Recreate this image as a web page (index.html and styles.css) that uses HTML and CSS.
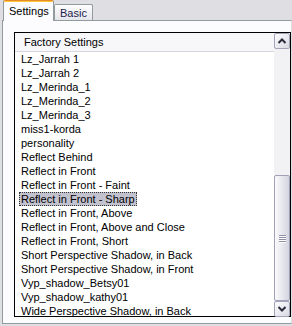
FILE: index.html
```html
<!DOCTYPE html>
<html lang="en">
<head>
    <meta charset="UTF-8">
    <title>Settings</title>
    <link rel="stylesheet" href="styles.css">
</head>
<body>
    <div class="tabs">
        <div class="tab active">Settings</div>
        <div class="tab">Basic</div>
    </div>

    <div class="panel">
        <div class="listbox">
            <div class="list-main">
                <div class="list-header">Factory Settings</div>
                <ul class="items">
                    <li>Lz_Jarrah 1</li>
                    <li>Lz_Jarrah 2</li>
                    <li>Lz_Merinda_1</li>
                    <li>Lz_Merinda_2</li>
                    <li>Lz_Merinda_3</li>
                    <li>miss1-korda</li>
                    <li>personality</li>
                    <li>Reflect Behind</li>
                    <li>Reflect in Front</li>
                    <li>Reflect in Front - Faint</li>
                    <li class="selected">Reflect in Front - Sharp</li>
                    <li>Reflect in Front, Above</li>
                    <li>Reflect in Front, Above and Close</li>
                    <li>Reflect in Front, Short</li>
                    <li>Short Perspective Shadow, in Back</li>
                    <li>Short Perspective Shadow, in Front</li>
                    <li>Vyp_shadow_Betsy01</li>
                    <li>Vyp_shadow_kathy01</li>
                    <li>Wide Perspective Shadow, in Back</li>
                </ul>
            </div>

            <div class="scrollbar">
                <div class="sb-btn">
                    <svg width="14" height="14" viewBox="0 0 14 14"><polyline points="3.5,9 7,5.5 10.5,9" fill="none" stroke="#2b2b3a" stroke-width="2"/></svg>
                </div>
                <div class="sb-track">
                    <div class="sb-thumb">
                        <div class="grip"><span></span><span></span><span></span><span></span></div>
                    </div>
                </div>
                <div class="sb-btn">
                    <svg width="14" height="14" viewBox="0 0 14 14"><polyline points="3.5,5 7,8.5 10.5,5" fill="none" stroke="#2b2b3a" stroke-width="2"/></svg>
                </div>
            </div>
        </div>
    </div>
</body>
</html>
```

FILE: styles.css
```css
body {
    margin: 0;
    width: 292px;
    height: 326px;
    overflow: hidden;
    background: #dfdfe3;
    font-family: "Liberation Sans", Arial, sans-serif;
    font-size: 11px;
    color: #000;
}
.tabs {
    display: flex;
    align-items: flex-end;
    height: 20px;
    padding-left: 3px;
}
.tab {
    box-sizing: border-box;
    height: 16px;
    width: 39px;
    padding: 2px 0 0 5px;
    border: 1px solid #919b9c;
    border-bottom: none;
    border-radius: 2px 2px 0 0;
    background: linear-gradient(#fefefe, #e4e4ec);
    color: #1c1c4c;
}
.tab.active {
    position: relative;
    z-index: 1;
    height: 21px;
    width: 51px;
    margin-bottom: -1px;
    padding: 4px 0 0 5px;
    border-top: 1px solid #e68b2c;
    box-shadow: inset 0 1px #ffc73c;
    background: #fcfcfe;
    color: #000;
}
.panel {
    box-sizing: border-box;
    width: 290px;
    height: 304px;
    margin-left: 2px;
    padding: 11px 0 0 11px;
    border: 1px solid #919b9c;
    border-right-color: #dfdfe3;
    background: #fcfcfe;
}
.listbox {
    display: flex;
    box-sizing: border-box;
    width: 277px;
    height: 285px;
    border: 1px solid #000;
    background: #fff;
}
.list-main {
    flex: 1;
    overflow: hidden;
}
.list-header {
    height: 18px;
    line-height: 18px;
    padding-left: 9px;
    background: #f7f7fa;
    border-bottom: 1px solid #d6d6e0;
}
.items {
    list-style: none;
    margin: 0;
    padding: 0;
    white-space: nowrap;
}
.items li {
    width: fit-content;
    height: 14px;
    line-height: 14px;
    margin-left: 4px;
    padding: 0 2px;
}
.items li.selected {
    background: #c2c2ce;
    outline: 1px dotted #333;
    outline-offset: -1px;
}
.scrollbar {
    display: flex;
    flex-direction: column;
    width: 16px;
    background: #f2f2f5;
}
.sb-btn {
    box-sizing: border-box;
    display: flex;
    align-items: center;
    justify-content: center;
    height: 16px;
    border: 1px solid #a4a4b8;
    border-radius: 2px;
    background: linear-gradient(135deg, #fdfdff, #d9d9e4);
}
.sb-track {
    flex: 1;
}
.sb-thumb {
    box-sizing: border-box;
    display: flex;
    align-items: center;
    justify-content: center;
    height: 126px;
    margin-top: 126px;
    border: 1px solid #a0a0b6;
    border-radius: 2px;
    background: linear-gradient(90deg, #fbfbfd, #d4d4e0);
}
.grip {
    display: flex;
    flex-direction: column;
    gap: 1px;
    width: 7px;
}
.grip span {
    height: 1px;
    background: #8e8ea2;
    box-shadow: 0 1px #fff;
}
```
